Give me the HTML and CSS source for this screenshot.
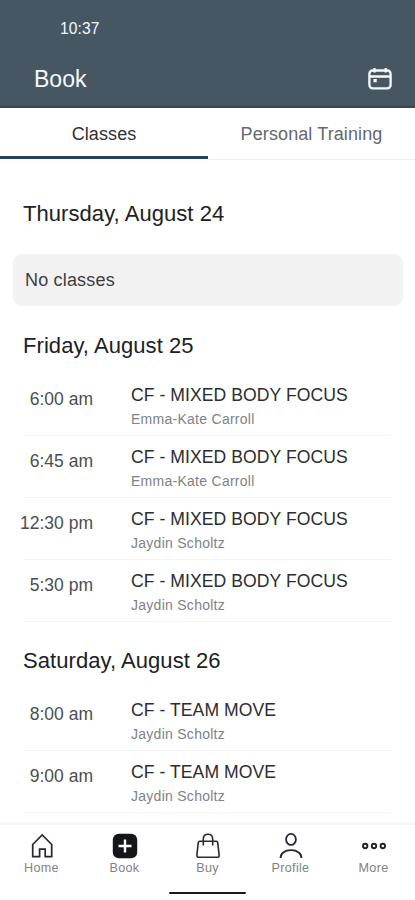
FILE: index.html
```html
<!DOCTYPE html>
<html lang="en">
<head>
<meta charset="utf-8">
<meta name="viewport" content="width=device-width, initial-scale=1">
<title>Book</title>
<link rel="stylesheet" href="styles.css">
</head>
<body>
<header class="header">
  <div class="clock">10:37</div>
  <div class="titlebar">
    <h1>Book</h1>
    <svg class="calendar" width="26" height="24" viewBox="0 0 26 24" fill="none" stroke="#f4fafe" stroke-width="2.3">
      <rect x="2.400" y="3.500" width="21.200" height="17.800" rx="3.200"/>
      <path d="M2.400 9.500h21.200M7.500 1v4.500M18.700 1v4.500"/>
      <path d="M6.500 12h3.200v3.300H6.500z" fill="#f4fafe" stroke="none"/>
    </svg>
  </div>
</header>
<nav class="tabs">
  <div class="tab active">Classes</div>
  <div class="tab">Personal Training</div>
</nav>
<main class="schedule">
  <h2>Thursday, August 24</h2>
  <div class="empty">No classes</div>
  <h2>Friday, August 25</h2>
  <ul>
    <li><time>6:00 am</time><div><h3>CF - MIXED BODY FOCUS</h3><p>Emma-Kate Carroll</p></div></li>
    <li><time>6:45 am</time><div><h3>CF - MIXED BODY FOCUS</h3><p>Emma-Kate Carroll</p></div></li>
    <li><time>12:30 pm</time><div><h3>CF - MIXED BODY FOCUS</h3><p>Jaydin Scholtz</p></div></li>
    <li><time>5:30 pm</time><div><h3>CF - MIXED BODY FOCUS</h3><p>Jaydin Scholtz</p></div></li>
  </ul>
  <h2 class="last">Saturday, August 26</h2>
  <ul>
    <li><time>8:00 am</time><div><h3>CF - TEAM MOVE</h3><p>Jaydin Scholtz</p></div></li>
    <li><time>9:00 am</time><div><h3>CF - TEAM MOVE</h3><p>Jaydin Scholtz</p></div></li>
  </ul>
</main>
<footer class="bottom">
  <nav class="items">
    <div class="item">
      <svg width="28" height="28" viewBox="0 0 28 28" fill="none" stroke="#24243a" stroke-width="1.7"><path d="M4.700 12.500 14.200 3l9.500 9.500V24.700h-6.500v-7.500h-5.600v7.500H4.700z"/></svg>
      <span>Home</span>
    </div>
    <div class="item">
      <svg width="28" height="28" viewBox="0 0 28 28"><rect x="1.800" y="1.800" width="24.400" height="24.400" rx="6" fill="#15161a"/><path d="M14 7.500v13M7.500 14h13" stroke="#fff" stroke-width="2.400"/></svg>
      <span>Book</span>
    </div>
    <div class="item">
      <svg width="28" height="28" viewBox="0 0 28 28" fill="none" stroke="#2b2c34" stroke-width="1.600" stroke-linejoin="round"><path d="M5.600 9.200h16.800q1.100 0 1.300 1.200l1.400 12.300q.2 2.600-2 2.600H4.900q-2.200 0-2-2.600l1.400-12.300q.2-1.200 1.300-1.200z"/><path d="M9.300 13.500V7q0-4.800 4.700-4.800T18.700 7v6.500"/></svg>
      <span>Buy</span>
    </div>
    <div class="item">
      <svg width="28" height="28" viewBox="0 0 28 28" fill="none" stroke="#24243a" stroke-width="1.800"><ellipse cx="14" cy="7.400" rx="4.900" ry="5.500"/><path d="M3.500 26c0-4.500 4-7.800 10.500-7.800S24.500 21.500 24.500 26"/></svg>
      <span>Profile</span>
    </div>
    <div class="item">
      <svg width="28" height="28" viewBox="0 0 28 28" fill="none" stroke="#202126" stroke-width="1.900"><circle cx="5.200" cy="14" r="2.200"/><circle cx="14" cy="14" r="2.200"/><circle cx="22.800" cy="14" r="2.200"/></svg>
      <span>More</span>
    </div>
  </nav>
  <div class="handle"></div>
</footer>
</body>
</html>
```
FILE: styles.css
```css
* { box-sizing: border-box; margin: 0; padding: 0; }
body {
  width: 415px;
  height: 900px;
  overflow: hidden;
  display: flex;
  flex-direction: column;
  background: #fff;
  font-family: "Liberation Sans", Arial, sans-serif;
}
h1, h2, h3 { font-weight: 400; }
.header {
  height: 108px;
  flex: none;
  background: #475663;
  border-bottom: 2px solid #34465a;
  color: #f4fafe;
}
.clock {
  padding: 20px 0 0 60px;
  font-size: 15.6px;
  line-height: 18px;
  letter-spacing: 0.1px;
}
.titlebar {
  display: flex;
  justify-content: space-between;
  align-items: center;
  margin-top: 26px;
  padding: 0 22px 0 34px;
  height: 30px;
}
.titlebar h1 { font-size: 23px; line-height: 30px; }
.tabs {
  flex: none;
  display: grid;
  grid-template-columns: 208px 1fr;
  height: 52px;
}
.tab {
  height: 52px;
  border-bottom: 1px solid #f1f1f1;
  text-align: center;
  font-size: 18px;
  line-height: 52px;
  letter-spacing: 0.1px;
  color: #66686b;
}
.tab.active { border-bottom: 3px solid #24425a; height: 51px; color: #303236; }
.schedule { flex: 1; min-height: 0; overflow: hidden; padding-top: 41px; }
.schedule h2 {
  padding-left: 23px;
  font-size: 22px;
  line-height: 26px;
  letter-spacing: 0.06px;
  color: #202124;
}
.empty {
  margin: 27px 12px 27px 13px;
  height: 52px;
  padding-left: 12px;
  border-radius: 9px;
  background: #f2f2f2;
  font-size: 18px;
  line-height: 52px;
  letter-spacing: 0.18px;
  color: #3c3d40;
}
.schedule ul { list-style: none; margin: 15px 24px 0; }
.schedule li {
  display: grid;
  grid-template-columns: 69px 1fr;
  column-gap: 38px;
  height: 62px;
  padding-top: 11px;
  border-bottom: 1px solid #f3f3f3;
}
.schedule time {
  justify-self: end;
  white-space: nowrap;
  padding-top: 4px;
  font-size: 17.5px;
  line-height: 20px;
  color: #4c4e51;
}
.schedule li h3 {
  font-size: 17.6px;
  line-height: 20px;
  letter-spacing: 0.05px;
  color: #2c2d30;
}
.schedule li p {
  margin-top: 5px;
  font-size: 14px;
  line-height: 18px;
  letter-spacing: 0.27px;
  color: #808285;
}
.schedule .last { margin-top: 26px; }
.bottom { flex: none; height: 78px; border-top: 3px solid #f7f7f7; }
.items { display: grid; grid-template-columns: repeat(5, 83px); height: 66px; }
.item { display: flex; flex-direction: column; align-items: center; padding-top: 7px; }
.item span {
  font-size: 12.6px;
  line-height: 16px;
  letter-spacing: 0.3px;
  color: #808285;
}
.handle { width: 77px; height: 2px; margin: 1px auto 0; border-radius: 1px; background: #17181a; }
```
